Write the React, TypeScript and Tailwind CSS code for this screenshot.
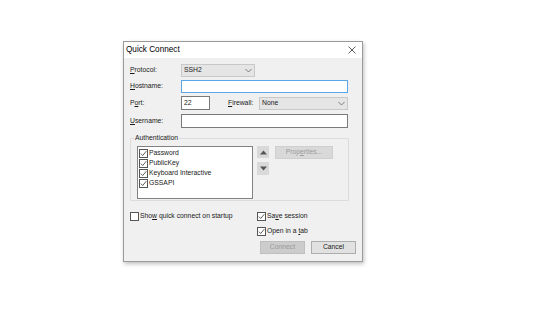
import React from "react";

const font = { fontFamily: '"Liberation Sans", Arial, sans-serif' };

function Check({ checked = true }: { checked?: boolean }) {
  return (
    <span className="w-[9px] h-[9px] border border-[#555] bg-white flex items-center justify-center shrink-0">
      {checked && (
        <svg width="7" height="7" viewBox="0 0 7 7">
          <path d="M0.8 3.6 L2.7 5.5 L6.3 1.2" stroke="#333" strokeWidth="0.8" fill="none" />
        </svg>
      )}
    </span>
  );
}

function Chevron() {
  return (
    <svg width="7" height="5" viewBox="0 0 7 5">
      <path d="M0.5 1 L3.5 4 L6.5 1" stroke="#666" strokeWidth="0.8" fill="none" />
    </svg>
  );
}

export default function App() {
  return (
    <div className="w-[553px] h-[329px] bg-white relative" style={font}>
      <div className="absolute left-[123px] top-[41px] w-[240px] h-[221px] bg-[#f0f0f0] border border-[#9a9a9a] shadow-[1px_2px_4px_rgba(0,0,0,0.25)] flex flex-col text-[6.8px] text-[#1a1a1a] leading-none">
        {/* title */}
        <div className="h-[16px] bg-white flex items-center justify-between pl-[2px] pr-[6px]">
          <span className="text-[8.2px] text-black">Quick Connect</span>
          <svg width="8" height="8" viewBox="0 0 8 8">
            <path d="M0.5 0.5 L7.5 7.5 M7.5 0.5 L0.5 7.5" stroke="#333" strokeWidth="0.8" />
          </svg>
        </div>
        <div className="flex flex-col px-[6px] pt-[6px]">
          {/* protocol */}
          <div className="flex items-center h-[13px]">
            <span className="w-[51px]"><u>P</u>rotocol:</span>
            <div className="w-[74px] h-[13px] bg-[#e5e5e5] border border-[#c8c8c8] flex items-center justify-between px-[2px]">
              <span>SSH2</span>
              <Chevron />
            </div>
          </div>
          {/* hostname */}
          <div className="flex items-center h-[13px] mt-[3px]">
            <span className="w-[51px]"><u>H</u>ostname:</span>
            <div className="w-[167px] h-[13px] bg-white border border-[#5aa6e6]" />
          </div>
          {/* port */}
          <div className="flex items-center h-[14px] mt-[3px]">
            <span className="w-[51px]">P<u>o</u>rt:</span>
            <div className="w-[29px] h-[14px] bg-white border border-[#7a7a7a] flex items-center px-[2px]">22</div>
            <span className="ml-[18px] w-[31px]"><u>F</u>irewall:</span>
            <div className="w-[89px] h-[13px] bg-[#e5e5e5] border border-[#c8c8c8] flex items-center justify-between px-[2px]">
              <span>None</span>
              <Chevron />
            </div>
          </div>
          {/* username */}
          <div className="flex items-center h-[14px] mt-[4px]">
            <span className="w-[51px]"><u>U</u>sername:</span>
            <div className="w-[167px] h-[14px] bg-white border border-[#7a7a7a]" />
          </div>
          {/* auth group */}
          <div className="relative mt-[10px] w-[219px] h-[63px] border border-[#dcdcdc] rounded-[1px] px-[6px] pt-[7px]">
            <span className="absolute left-[3px] top-[-4px] bg-[#f0f0f0] px-[1px]">Authentication</span>
            <div className="flex">
              <div className="w-[116px] h-[53px] bg-white border border-[#828282] flex flex-col pt-[2px] pl-[1px] gap-[0.5px]">
                {["Password", "PublicKey", "Keyboard Interactive", "GSSAPI"].map((t) => (
                  <div key={t} className="flex items-center h-[9.5px] gap-[1px]">
                    <Check />
                    <span>{t}</span>
                  </div>
                ))}
              </div>
              <div className="flex flex-col ml-[4px] pt-[0px] gap-[4px]">
                <div className="w-[12px] h-[12px] bg-[#d9d9d9] flex items-center justify-center">
                  <svg width="7" height="5" viewBox="0 0 7 5"><path d="M0 4.5 L3.5 0.5 L7 4.5 Z" fill="#555" /></svg>
                </div>
                <div className="w-[12px] h-[13px] bg-[#d9d9d9] flex items-center justify-center">
                  <svg width="7" height="5" viewBox="0 0 7 5"><path d="M0 0.5 L3.5 4.5 L7 0.5 Z" fill="#555" /></svg>
                </div>
              </div>
              <div className="ml-[6px] w-[58px] h-[13px] bg-[#d9d9d9] border border-[#cfcfcf] flex items-center justify-center text-[#9a9a9a]">
                Prop<u>e</u>rties...
              </div>
            </div>
          </div>
          {/* options */}
          <div className="flex mt-[10px]">
            <div className="flex items-center gap-[1px] w-[127px] h-[11px]">
              <Check checked={false} />
              <span>Sho<u>w</u> quick connect on startup</span>
            </div>
            <div className="flex flex-col gap-[4px]">
              <div className="flex items-center gap-[1px] h-[11px]">
                <Check />
                <span>Sa<u>v</u>e session</span>
              </div>
              <div className="flex items-center gap-[1px] h-[11px]">
                <Check />
                <span>Open in a <u>t</u>ab</span>
              </div>
            </div>
          </div>
          <div className="flex justify-end gap-[6px] mt-[4px] pr-[0px]">
            <div className="w-[45px] h-[13px] bg-[#cccccc] border border-[#bfbfbf] flex items-center justify-center text-[#9a9a9a]">Connect</div>
            <div className="w-[45px] h-[13px] bg-[#e1e1e1] border border-[#adadad] flex items-center justify-center">Cancel</div>
          </div>
        </div>
      </div>
    </div>
  );
}
